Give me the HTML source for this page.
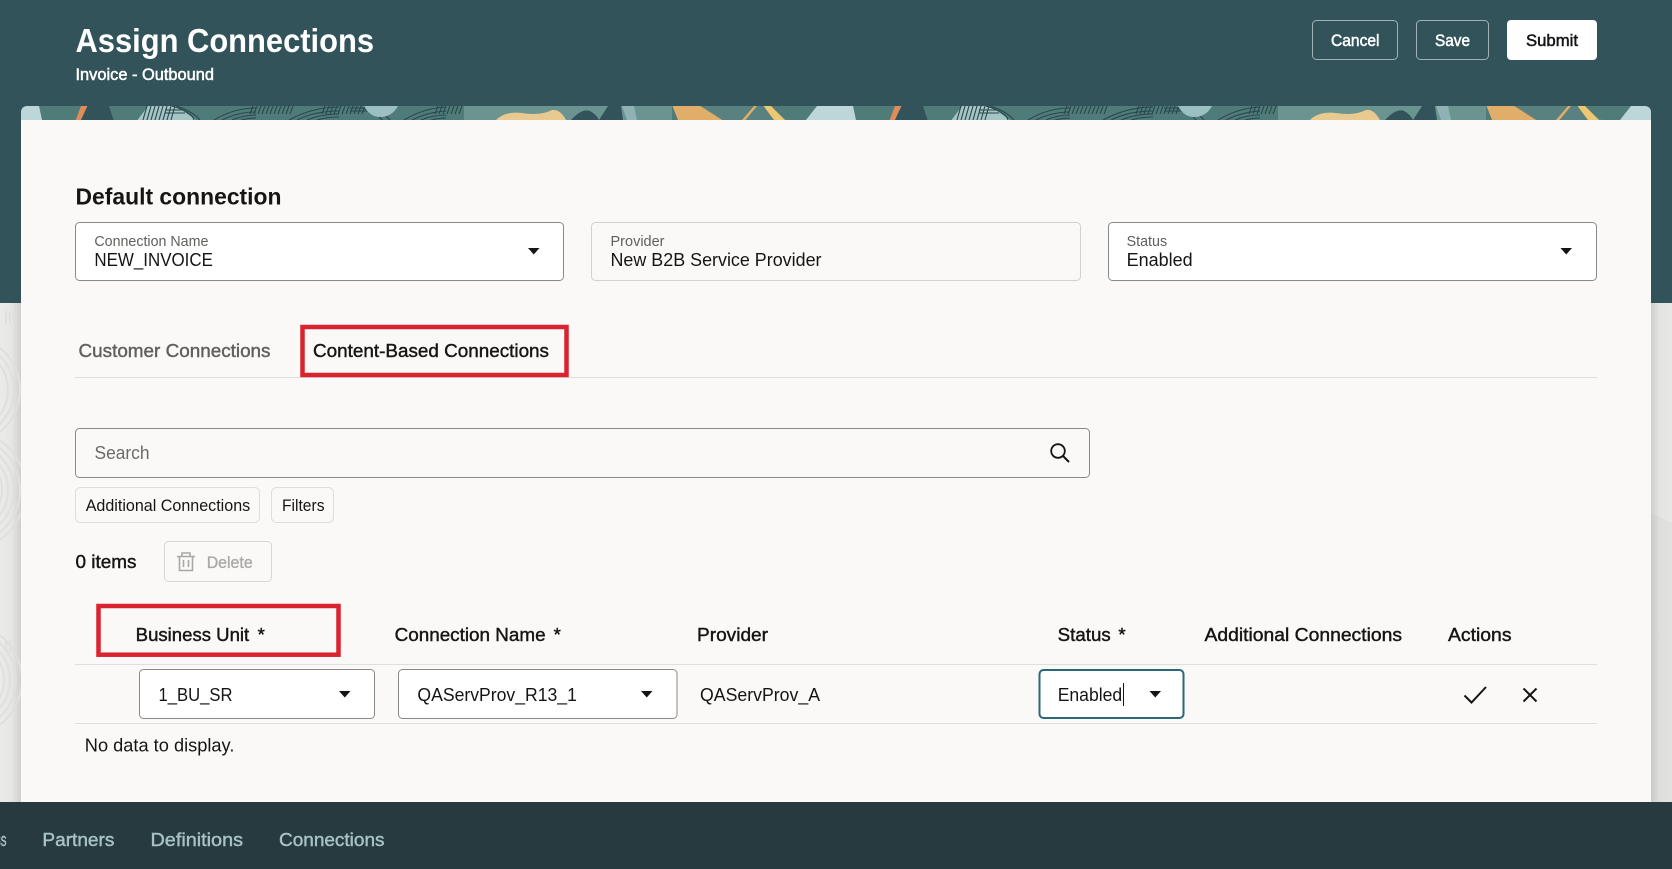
<!DOCTYPE html>
<html lang="en">
<head>
<meta charset="utf-8">
<title>Assign Connections</title>
<style>
html,body{margin:0;padding:0;width:1672px;height:869px;overflow:hidden;background:#e9e9e7}
svg{display:block}
text{font-family:"Liberation Sans",sans-serif;font-size:18px;fill:#161513}
.w{fill:#fff;stroke:#fff;stroke-width:.5px}
.b{font-weight:700}
.l{font-size:14.500px;fill:#5f5f5c}
.v{font-size:18.500px}
.h{font-size:18.500px;stroke:#161513;stroke-width:.42px}
.f{font-size:18.500px;fill:#a9c2c3;stroke:#a9c2c3;stroke-width:.42px}
</style>
</head>
<body>
<svg width="1672" height="869" viewBox="0 0 1672 869" xmlns="http://www.w3.org/2000/svg">
<defs>
<linearGradient id="sl" x1="0" x2="1"><stop offset="0" stop-color="#ebebe9"/><stop offset=".55" stop-color="#e6e6e4"/><stop offset="1" stop-color="#cfcfcd"/></linearGradient>
<linearGradient id="sr" x1="0" x2="1"><stop offset="0" stop-color="#cfcfcd"/><stop offset=".4" stop-color="#e3e3e1"/><stop offset="1" stop-color="#e8e8e6"/></linearGradient>
<clipPath id="strip"><path d="M21 120V112a6 6 0 0 1 6-6H1645a6 6 0 0 1 6 6V120Z"/></clipPath>
<clipPath id="ls"><rect x="0" y="303" width="21" height="499"/></clipPath>
<g id="tile">
<rect x="0" y="106" width="814" height="14" fill="#4f7b78"/>
<rect x="464" y="106" width="208" height="14" fill="#6b9490"/>
<path d="M-8 120L3 106H39L42 120Z" fill="#bcd6da"/>
<path d="M81 106H87.500L81 120H75.700Z" fill="#dd8c5a"/>
<path d="M87.500 106H109L113.600 120H81Z" fill="#33535a"/>
<path d="M137.500 120L148 106H176L196 120Z" fill="#a5c5c5"/>
<g fill="none" stroke="#2a474d" stroke-width="1.100">
<path d="M143 120l4-14M147 120l4-14M151 120l4-14M155 120l4-14M159 120l4-14M163 120l4-14M167 120l4-14M171 120l4-14M165 110h18M165 113h20"/>
<path d="M176 106q16 5 24 14M172 106q20 6 22 14"/>
<path d="M214 120q20-12 42-12M222 120q16-8 34-8M232 120q12-5 24-5M241 120q8-2 15-2"/>
<path d="M253 106l-3 8M257 106l-3 8M261 106l-3 8M265 106l-3 8M269 106l-3 8M273 106l-3 8M277 106l-3 8M281 106l-3 8M285 106l-3 8M289 106l-3 8M293 106l-3 8"/>
<path d="M289 120q24-13 50-13M297 120q18-9 42-9M307 120q14-6 32-6M317 120q10-3 22-3"/>
<path d="M325 106l-3 8M329 106l-3 8M333 106l-3 8M337 106l-3 8M341 106l-3 8M345 106l-3 8M349 106l-3 8M353 106l-3 8M357 106l-3 8M361 106l-3 8M365 106l-3 8"/>
<path d="M350 108h16M350 111h18M366 106q16 5 24 14M362 108q14 4 20 12"/>
<path d="M404 120q20-12 42-13M412 120q16-8 34-9M421 120q12-5 25-5M431 120q8-2 15-2"/>
<path d="M438 106l-3 8M442 106l-3 8M446 106l-3 8M450 106l-3 8M454 106l-3 8M458 106l-3 8M462 106l-3 8"/>
</g>
<path d="M364 106H398Q392 117 380 117Q370 117 364 106Z" fill="#9cc0c2"/>
<path d="M496 120Q505 111 522 113Q540 116 552 110Q560 109 566 120Z" fill="#e8c98f"/>
<path d="M571 120Q582 108 590 111Q596 114 599 120Z" fill="#33535a"/>
<path d="M599 120L608 106H621L623 120Z" fill="#33535a"/>
<path d="M622 106H634L637 120H627Z" fill="#8fb3b5"/>
<path d="M672.500 106H701L722.500 120H678Z" fill="#e0ae68"/>
<path d="M700 106H760L790 120H722Z" fill="#5c8581" opacity=".7"/>
<path d="M742 120L754 106H757L745.500 120Z" fill="#e0ae68"/>
<path d="M763.500 106H771L785 120H774Z" fill="#edc870"/>
</g>
</defs>

<rect width="1672" height="869" fill="#e9e9e7"/>

<!-- side strips -->
<rect x="0" y="303" width="21" height="499" fill="url(#sl)"/>
<g clip-path="url(#ls)" fill="none" stroke="#dfdfdd" stroke-width="2">
<circle cx="-34" cy="490" r="36"/><circle cx="-34" cy="490" r="42"/><circle cx="-34" cy="490" r="48"/><circle cx="-34" cy="490" r="54"/><circle cx="-34" cy="490" r="60"/>
<circle cx="-34" cy="390" r="42"/><circle cx="-34" cy="390" r="48"/><circle cx="-34" cy="390" r="54"/>
<circle cx="-34" cy="680" r="38"/><circle cx="-34" cy="680" r="44"/><circle cx="-34" cy="680" r="50"/><circle cx="-34" cy="680" r="56"/>
<path d="M6 311v12M10 311v12M14 311v12M6 640v12M10 640v12M14 640v12"/>
</g>
<rect x="1651" y="303" width="21" height="499" fill="url(#sr)"/>
<path d="M1651 513L1672 523V802H1651Z" fill="#000" opacity=".025"/>

<!-- header -->
<rect x="0" y="0" width="1672" height="303" fill="#33535a"/>
<g clip-path="url(#strip)">
<use href="#tile" x="0"/>
<use href="#tile" x="814"/>
<use href="#tile" x="1628"/>
</g>

<!-- card -->
<rect x="21" y="120" width="1630" height="682" fill="#fbf9f8"/>

<!-- footer -->
<rect x="0" y="802" width="1672" height="67" fill="#263a40"/>
<text class="f" x="-5" y="846" textLength="11.500" lengthAdjust="spacingAndGlyphs">ss</text>
<text class="f" x="42.400" y="846" textLength="72" lengthAdjust="spacingAndGlyphs">Partners</text>
<text class="f" x="150.500" y="846" textLength="92.500" lengthAdjust="spacingAndGlyphs">Definitions</text>
<text class="f" x="279" y="846" textLength="105.500" lengthAdjust="spacingAndGlyphs">Connections</text>

<!-- title -->
<text class="b" x="75.500" y="52" style="font-size:33.500px;fill:#fff" textLength="298.500" lengthAdjust="spacingAndGlyphs">Assign Connections</text>
<text class="w" x="75.500" y="80" style="font-size:16.500px" textLength="138.500" lengthAdjust="spacingAndGlyphs">Invoice - Outbound</text>

<!-- header buttons -->
<rect x="1312.500" y="20.500" width="85" height="39" rx="4" fill="none" stroke="#9db2b5"/>
<text class="w" x="1331" y="46" style="font-size:16.500px" textLength="48.500" lengthAdjust="spacingAndGlyphs">Cancel</text>
<rect x="1416.500" y="20.500" width="72" height="39" rx="4" fill="none" stroke="#9db2b5"/>
<text class="w" x="1435" y="46" style="font-size:16.500px" textLength="35" lengthAdjust="spacingAndGlyphs">Save</text>
<rect x="1507" y="20" width="90" height="40" rx="4" fill="#fff"/>
<text x="1526" y="46" style="font-size:16.500px;stroke:#161513;stroke-width:.5px" textLength="52" lengthAdjust="spacingAndGlyphs">Submit</text>

<!-- default connection -->
<text class="b" x="75.500" y="204.500" style="font-size:23px" textLength="206" lengthAdjust="spacingAndGlyphs">Default connection</text>

<rect x="75.500" y="222.500" width="488" height="58" rx="4" fill="#fff" stroke="#8a8986"/>
<text class="l" x="94.400" y="246" textLength="114" lengthAdjust="spacingAndGlyphs">Connection Name</text>
<text class="v" x="94.400" y="266" textLength="118.500" lengthAdjust="spacingAndGlyphs">NEW_INVOICE</text>
<path d="M528 248h11.500l-5.750 6.500Z" fill="#161513"/>

<rect x="591.500" y="222.500" width="489" height="58" rx="4" fill="#fbf9f8" stroke="#d2d1ce"/>
<text class="l" x="610.500" y="246" textLength="54" lengthAdjust="spacingAndGlyphs">Provider</text>
<text class="v" x="610.500" y="266" textLength="211" lengthAdjust="spacingAndGlyphs">New B2B Service Provider</text>

<rect x="1108.500" y="222.500" width="488" height="58" rx="4" fill="#fff" stroke="#8a8986"/>
<text class="l" x="1126.600" y="246" textLength="40.500" lengthAdjust="spacingAndGlyphs">Status</text>
<text class="v" x="1126.600" y="266" textLength="66" lengthAdjust="spacingAndGlyphs">Enabled</text>
<path d="M1560.500 248h11.500l-5.750 6.500Z" fill="#161513"/>

<!-- tabs -->
<line x1="75" y1="377.500" x2="1597" y2="377.500" stroke="#e0dfdc"/>
<text x="78.500" y="357" style="font-size:18.500px;fill:#5f5f5c;stroke:#5f5f5c;stroke-width:.42px" textLength="192" lengthAdjust="spacingAndGlyphs">Customer Connections</text>
<text class="h" x="313" y="357" textLength="236" lengthAdjust="spacingAndGlyphs">Content-Based Connections</text>
<rect x="302.500" y="327" width="264" height="48" fill="none" stroke="#d9232e" stroke-width="4.500"/>

<!-- search -->
<rect x="75.500" y="428.500" width="1014" height="49" rx="4" fill="#fbf9f8" stroke="#8a8986"/>
<text x="94.500" y="459" style="font-size:18.500px;fill:#6b6a67" textLength="55" lengthAdjust="spacingAndGlyphs">Search</text>
<circle cx="1058" cy="451" r="6.800" fill="none" stroke="#161513" stroke-width="1.800"/>
<path d="M1063 456l6 6" stroke="#161513" stroke-width="2" fill="none"/>

<!-- chips -->
<rect x="75.500" y="487.500" width="184" height="35" rx="5" fill="#fbf9f8" stroke="#dfdedb"/>
<text x="85.700" y="511" style="font-size:16.500px" textLength="164.500" lengthAdjust="spacingAndGlyphs">Additional Connections</text>
<rect x="271.500" y="487.500" width="62" height="35" rx="5" fill="#fbf9f8" stroke="#dfdedb"/>
<text x="282" y="511" style="font-size:16.500px" textLength="42.500" lengthAdjust="spacingAndGlyphs">Filters</text>

<!-- items -->
<text class="h" x="75.500" y="568" textLength="61" lengthAdjust="spacingAndGlyphs">0 items</text>
<rect x="164.500" y="541.500" width="107" height="40" rx="4" fill="#fbf9f8" stroke="#d8d7d4"/>
<g fill="none" stroke="#a8a8a5" stroke-width="1.600">
<path d="M177 556.500h18M182 556.500v-3.500h8v3.500M179.500 556.500v14h13v-14M183.500 560v7M188.500 560v7"/>
</g>
<text x="206.700" y="568" style="font-size:16.500px;fill:#a8a8a5;stroke:#a8a8a5;stroke-width:.35px" textLength="46" lengthAdjust="spacingAndGlyphs">Delete</text>

<!-- table header -->
<text class="h" x="135.700" y="641" textLength="113.500" lengthAdjust="spacingAndGlyphs">Business Unit</text>
<text class="h" x="257.600" y="641">*</text>
<rect x="98.500" y="606" width="240" height="48.700" fill="none" stroke="#d9232e" stroke-width="4.500"/>
<text class="h" x="394.600" y="641" textLength="151" lengthAdjust="spacingAndGlyphs">Connection Name</text>
<text class="h" x="553.600" y="641">*</text>
<text class="h" x="697" y="641" textLength="71" lengthAdjust="spacingAndGlyphs">Provider</text>
<text class="h" x="1057.700" y="641" textLength="53" lengthAdjust="spacingAndGlyphs">Status</text>
<text class="h" x="1118.400" y="641">*</text>
<text class="h" x="1204.500" y="641" textLength="197.500" lengthAdjust="spacingAndGlyphs">Additional Connections</text>
<text class="h" x="1448" y="641" textLength="63.500" lengthAdjust="spacingAndGlyphs">Actions</text>

<!-- row -->
<line x1="75" y1="664.500" x2="1597" y2="664.500" stroke="#e0dfdc"/>
<line x1="75" y1="723.500" x2="1597" y2="723.500" stroke="#e0dfdc"/>

<rect x="139.500" y="669.500" width="235" height="49" rx="4" fill="#fff" stroke="#8a8986"/>
<text class="v" x="158.500" y="701" textLength="74" lengthAdjust="spacingAndGlyphs">1_BU_SR</text>
<path d="M339 691h11.500l-5.750 6.500Z" fill="#161513"/>

<rect x="398.500" y="669.500" width="278.500" height="49" rx="4" fill="#fff" stroke="#8a8986"/>
<text class="v" x="417.400" y="701" textLength="159.500" lengthAdjust="spacingAndGlyphs">QAServProv_R13_1</text>
<path d="M641 691h11.500l-5.750 6.500Z" fill="#161513"/>

<text class="v" x="700" y="701" textLength="120" lengthAdjust="spacingAndGlyphs">QAServProv_A</text>

<rect x="1039.500" y="670" width="144" height="48" rx="4" fill="#fff" stroke="#2b6878" stroke-width="2"/>
<text class="v" x="1057.700" y="701" textLength="64.500" lengthAdjust="spacingAndGlyphs">Enabled</text>
<line x1="1123.500" y1="683" x2="1123.500" y2="706" stroke="#161513"/>
<path d="M1149.500 691h11.500l-5.750 6.500Z" fill="#161513"/>

<path d="M1464.500 695.500l7 7 14.500-15.500" fill="none" stroke="#161513" stroke-width="2"/>
<path d="M1523.500 688.500l13 13M1536.500 688.500l-13 13" fill="none" stroke="#161513" stroke-width="2"/>

<text x="84.800" y="751.700" textLength="149.600" lengthAdjust="spacingAndGlyphs">No data to display.</text>
</svg>
</body>
</html>
